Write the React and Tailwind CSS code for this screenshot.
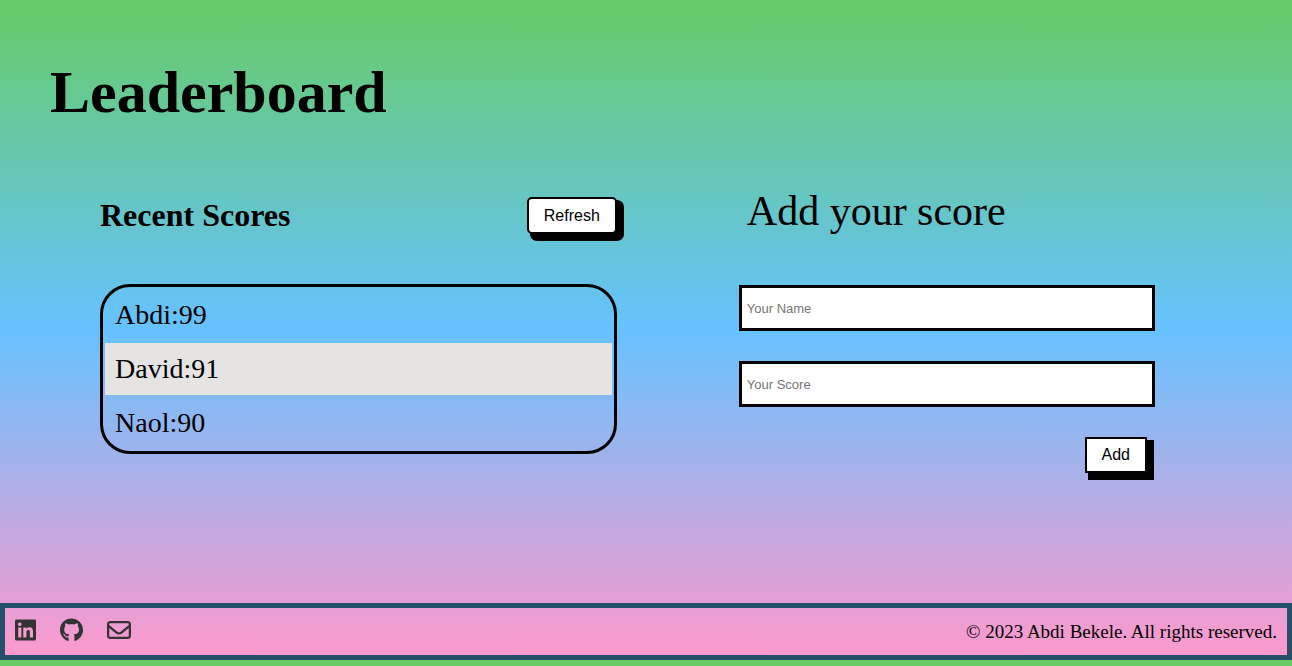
import { FaLinkedin, FaGithub } from 'react-icons/fa';
import { FaRegEnvelope } from 'react-icons/fa6';

const scores = [
  { name: 'Abdi', score: 99 },
  { name: 'David', score: 91 },
  { name: 'Naol', score: 90 },
];

const links = [
  { label: 'LinkedIn', Icon: FaLinkedin, width: 'w-[21px]' },
  { label: 'GitHub', Icon: FaGithub, width: 'w-[23px]' },
  { label: 'Email', Icon: FaRegEnvelope, width: 'w-6' },
];

const buttonStyle =
  "border-2 border-black bg-white px-[15px] font-['Liberation_Sans',sans-serif] text-base leading-none shadow-[5px_5px_0_2px_#000]";

function ScoreList() {
  return (
    <section className="ml-[100px] w-2/5">
      <div className="flex items-start justify-between">
        <h2 className="text-[32px] leading-9 font-bold">Recent Scores</h2>
        <button type="button" className={`${buttonStyle} h-[37px] rounded-[5px]`}>
          Refresh
        </button>
      </div>
      <ul className="mt-[50px] flex flex-col gap-0.5 rounded-[30px] border-3 border-black p-0.5">
        {scores.map(({ name, score }) => (
          <li key={name} className="p-2.5 text-[28px] leading-8 even:bg-[#e5e4e2]">
            {`${name}:${score}`}
          </li>
        ))}
      </ul>
    </section>
  );
}

function Field({ label, name }) {
  return (
    <input
      type="text"
      name={name}
      aria-label={label}
      placeholder={label}
      className="h-[46px] w-full border-3 border-black bg-white px-[5px] font-['Liberation_Sans',sans-serif] text-[13px] placeholder:text-[#757575]"
    />
  );
}

function ScoreForm() {
  return (
    <section className="mr-[137px] ml-[122px] flex-1">
      <h2 className="-mt-2.5 pl-2 text-[42px] leading-12">Add your score</h2>
      <form
        className="mt-[50px] flex flex-col gap-[30px]"
        onSubmit={(event) => event.preventDefault()}
      >
        <Field label="Your Name" name="name" />
        <Field label="Your Score" name="score" />
        <button type="submit" className={`${buttonStyle} mr-2 h-9 self-end`}>
          Add
        </button>
      </form>
    </section>
  );
}

export default function App() {
  return (
    <div className="flex min-h-screen flex-col bg-[#66cc66] pb-1.5 font-['Liberation_Serif',serif] text-black">
      <div className="flex flex-1 flex-col bg-[linear-gradient(#66cc66,#66c2ff,#ff99cc)]">
        <header className="px-[50px] pt-[58px]">
          <h1 className="text-[60px] leading-[69px] font-bold">Leaderboard</h1>
        </header>
        <main className="flex flex-1 items-start pt-[70px] pb-10">
          <ScoreList />
          <ScoreForm />
        </main>
        <footer className="flex items-start justify-between border-5 border-[#264f6b] px-2.5 pt-2.5 pb-[11px]">
          <nav className="flex items-center gap-6 text-[#333]">
            {links.map(({ label, Icon, width }) => (
              <a key={label} href="#" aria-label={label}>
                <Icon className={`block h-6 ${width}`} />
              </a>
            ))}
          </nav>
          <p className="pt-0.5 text-[19px] leading-6">© 2023 Abdi Bekele. All rights reserved.</p>
        </footer>
      </div>
    </div>
  );
}
